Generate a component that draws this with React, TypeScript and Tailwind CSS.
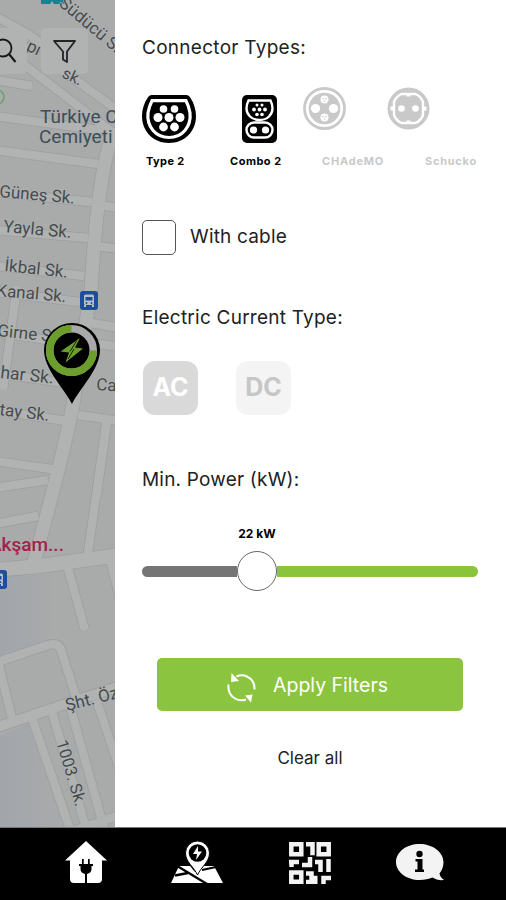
import React from 'react'

const roads = [
  'M-5 16 L28 34 L62 58 M18 60 L120 138 M62 70 L120 112 M-5 80 L32 86 M-5 116 L120 133',
  'M-5 150 L98 164 M-5 192 L92 202 M-5 230 L88 238 M-5 266 L84 276 M-5 292 L80 302 M-5 332 L80 345 M-5 373 L72 384 M-5 410 L66 421',
  'M98 205 L120 208 M96 246 L120 249 M86 322 L120 328 M84 342 L120 347 M78 415 L120 421 M108 415 L96 500',
  'M17 286 L3 390 M-5 461 L58 470 M-5 488 L48 480 M-5 524 L38 516',
  'M107 418 L87 560 M67 565 L85 630 M110 560 L120 598',
  'M-5 663 L48 645 Q58 642 61 650 L77 700 M-2 662 L13 722 M32 718 L72 835 M52 712 L88 835 M70 706 L106 835 M95 696 L120 770 M70 832 L120 815',
]

const mainRoads = [
  { d: 'M113 135 Q98 170 91 290 L72 410 Q62 460 34 562', w: 13 },
  { d: 'M-5 570 L40 566 L120 555', w: 14 },
  { d: 'M-5 728 L60 706 L120 686', w: 10 },
]

const streets = [
  { x: -1, y: 197, r: 5, size: 17, text: 'Güneş Sk.' },
  { x: 3, y: 232, r: 5, size: 17.2, text: 'Yayla Sk.' },
  { x: 4, y: 271, r: 6, size: 17, text: 'İkbal Sk.' },
  { x: -4, y: 296, r: 5, size: 17, text: 'Kanal Sk.' },
  { x: -3, y: 336, r: 6, size: 17, text: 'Girne Sk.' },
  { x: 0, y: 378, r: 6, size: 17.5, text: 'har Sk.' },
  { x: -1, y: 415, r: 7, size: 17, text: 'tay Sk.' },
  { x: 96, y: 390, r: 4, size: 17, text: 'Cad.' },
  { x: 67, y: 711, r: -14, size: 17, text: 'Şht. Özcan' },
  { x: 56, y: 742, r: 73, size: 16.5, text: '1003. Sk.' },
  { x: 58, y: 5, r: 40, size: 17, text: 'Südücü Sk.' },
  { x: 17, y: 46, r: 25, size: 17, text: 'apı' },
  { x: 61, y: 77, r: 25, size: 16, text: 'sk.' },
]

const BusStop = ({ x, y }: { x: number; y: number }) => (
  <g transform={`translate(${x} ${y})`}>
    <rect width="18" height="19" rx="3" fill="#1f4c9f" />
    <rect x="4" y="3.5" width="10" height="10.5" rx="1.5" fill="#b4bdca" />
    <rect x="5.5" y="6" width="7" height="3.5" fill="#1f4c9f" />
    <circle cx="6.5" cy="12" r="0.9" fill="#1f4c9f" />
    <circle cx="11.5" cy="12" r="0.9" fill="#1f4c9f" />
    <path d="M5 14v2M13 14v2" stroke="#b4bdca" strokeWidth="2" />
  </g>
)

const MapView = () => (
  <svg className="block h-[827px] w-[115px] shrink-0" viewBox="0 0 115 827" fontFamily="Roboto, sans-serif">
    <defs>
      <linearGradient id="park">
        <stop offset="0" stopColor="#a2a6ab" />
        <stop offset="1" stopColor="#a9aaaa" />
      </linearGradient>
    </defs>
    <rect width="115" height="827" fill="#a9aaaa" />
    <path d="M0 577 L50 574 L50 645 L0 660Z M0 736 L30 724 L68 827 L0 827Z" fill="url(#park)" />
    <g fill="none" stroke="#9c9e9f">
      {roads.map((d) => <path key={d} d={d} strokeWidth="10" />)}
      {mainRoads.map((m) => <path key={m.d} d={m.d} strokeWidth={m.w + 1.6} />)}
    </g>
    <g fill="none" stroke="#b1b3b3">
      {roads.map((d) => <path key={d} d={d} strokeWidth="8.4" />)}
      {mainRoads.map((m) => <path key={m.d} d={m.d} strokeWidth={m.w} />)}
    </g>

    <path d="M41 0h25v4H54l-2-3-2 3h-9z" fill="#168294" />
    <circle cx="-3" cy="97" r="7" fill="none" stroke="#65a36a" strokeWidth="1.5" />

    {/* search and filter buttons sit under the labels that run past them */}
    <rect x="-20" y="28" width="47" height="46" rx="5" fill="#b1b2b2" />
    <rect x="41" y="28" width="47" height="46" rx="5" fill="#b1b2b2" />

    <g fill="#454b4e" stroke="#b1b3b3" strokeWidth="1.5" paintOrder="stroke">
      {streets.map((s) => (
        <text key={s.text} fontSize={s.size} transform={`translate(${s.x} ${s.y}) rotate(${s.r})`}>{s.text}</text>
      ))}
    </g>
    <g fill="#3d4e57" fontSize="19">
      <text x="40" y="123">Türkiye C</text>
      <text x="39" y="143">Cemiyeti</text>
    </g>
    <text x="-11" y="551" fontSize="19" fontWeight="500" fill="#a51f4b">Akşam...</text>
    <BusStop x={80} y={291} />
    <BusStop x={-11} y={570} />

    <path d="M-20 28H22q5 0 5 5V69q0 5-5 5H-20z" fill="#b1b2b2" />
    <circle cx="3" cy="48" r="8.5" fill="none" stroke="#16191b" strokeWidth="1.8" />
    <path d="M9 54l6.5 8" stroke="#16191b" strokeWidth="2.2" />
    <path d="M54 41h21l-8 10.500v10.500l-4-2.500v-8z" fill="none" stroke="#202426" strokeWidth="1.8" strokeLinejoin="round" />

    {/* charging station pin */}
    <path d="M72 404 C64 388 44 369 44 350 A28 27 0 0 1 100 350 C100 369 80 388 72 404Z" fill="#000" />
    <circle cx="71.500" cy="350.500" r="21.800" fill="none" stroke="#a9a9ac" strokeWidth="7.500" />
    <path d="M93.300 350.500 A21.800 21.800 0 1 1 71.500 328.700" fill="none" stroke="#6c9e2c" strokeWidth="7.500" />
    <path d="M80 338 L60.500 351.500 L69 352.500 L65.500 362.500 L83 348.500 L75 347.500Z" fill="#6c9e2c" />
    <path d="M76.500 341 L70 351.500 M74 349 L68 359" stroke="#000" strokeWidth="0.8" />
  </svg>
)

const Type2Icon = () => (
  <svg className="h-[48px] w-[54px]" viewBox="0 0 54 48">
    <path d="M10 0h34q3 0 4.500 3C52 8 54 15 54 21 54 37 42 48 27 48S0 37 0 21C0 15 2 8 5.500 3Q7 0 10 0Z" />
    <path d="M10 5.700h34q3 6 4 12C49.500 32 40 42.500 27 42.500S4.500 32 6 17.700q1-6 4-12Z" fill="none" stroke="#fff" strokeWidth="3.200" />
    <g fill="#fff">
      <circle cx="21.500" cy="14" r="3.800" /><circle cx="32.500" cy="14" r="3.800" />
      <circle cx="16" cy="22.500" r="4.500" /><circle cx="27" cy="22.500" r="4.500" /><circle cx="38" cy="22.500" r="4.500" />
      <circle cx="21.500" cy="32" r="4.400" /><circle cx="32.500" cy="32" r="4.400" />
    </g>
  </svg>
)

const ComboIcon = () => (
  <svg className="h-[48px] w-[35px]" viewBox="0 0 35 48">
    <rect width="35" height="48" rx="5" />
    <path d="M6.500 5.500h22q2 4 2 8c0 6-5 11.500-13 11.500S4.500 19.500 4.500 13.500q0-4 2-8Z" fill="none" stroke="#fff" strokeWidth="2.400" />
    <rect x="4.500" y="27.500" width="26" height="15" rx="7.500" fill="none" stroke="#fff" strokeWidth="2.400" />
    <g fill="#fff">
      <circle cx="15" cy="10" r="1.500" /><circle cx="20" cy="10" r="1.500" />
      <circle cx="12" cy="14.500" r="1.900" /><circle cx="17.500" cy="14.500" r="1.900" /><circle cx="23" cy="14.500" r="1.900" />
      <circle cx="15" cy="19.500" r="1.800" /><circle cx="20" cy="19.500" r="1.800" />
      <circle cx="11.500" cy="35" r="3.600" /><circle cx="23.500" cy="35" r="3.600" />
    </g>
  </svg>
)

const ChademoIcon = () => (
  <svg className="size-[43px]" viewBox="0 0 43 43" fill="#c9c9c9">
    <circle cx="21.500" cy="21.500" r="20" fill="#fff" stroke="#c9c9c9" strokeWidth="2.800" />
    <circle cx="21.500" cy="21.500" r="15.800" />
    <g fill="#fff">
      <circle cx="12.500" cy="21.500" r="4.600" /><circle cx="30.500" cy="21.500" r="4.600" />
      <circle cx="21.500" cy="12.500" r="4" /><circle cx="21.500" cy="30.500" r="4" />
    </g>
    <g>
      <circle cx="20" cy="11.500" r="0.800" /><circle cx="23" cy="11.500" r="0.800" /><circle cx="21.500" cy="14" r="0.800" />
      <circle cx="20" cy="29.500" r="0.800" /><circle cx="23" cy="29.500" r="0.800" /><circle cx="21.500" cy="32" r="0.800" />
    </g>
  </svg>
)

const SchuckoIcon = () => (
  <svg className="size-[43px]" viewBox="0 0 43 43">
    <circle cx="21.500" cy="21.500" r="21" fill="#c9c9c9" />
    <path d="M14.500 7h14q5.500 2.500 7.500 8v13q-2 5.500-7.500 8h-14Q9 33.500 7 28V15q2-5.500 7.500-8Z" fill="none" stroke="#fff" strokeWidth="2.400" />
    <path d="M19.500 6h4v3.500h-4zM19.500 33.500h4V37h-4zM3.500 19.500h3.500v4H3.500zM36 19.500h3.500v4H36z" fill="#fff" />
    <g fill="#fff"><circle cx="14.500" cy="21.500" r="3.300" /><circle cx="28.500" cy="21.500" r="3.300" /></g>
  </svg>
)

const RefreshIcon = () => (
  <svg className="h-[32px] w-[30px]" viewBox="0 0 30 32" fill="none" stroke="#fff" strokeWidth="2">
    <path d="M9.500 4.500Q15 2 20 4.500Q28 8.500 27.500 17.500" />
    <path d="M1.500 12.500Q0.500 22 8 26.500Q13 29.500 19 27.500" />
    <path d="M4.500 1l7.500 8-8 1z M18 23.500l7.500-1-1.500 8z" fill="#fff" stroke="none" />
  </svg>
)

const HomeIcon = () => (
  <svg className="h-[43px] w-[42px]" viewBox="0 0 42 43" fill="#fff">
    <path d="M21 0L0 19.500h5V38q0 4 4 4h24q4 0 4-4V19.500h5Z" />
    <path d="M14 23h14v2h-1.500v3q0 4-4.500 5v9h-2v-9q-4.500-1-4.500-5v-3H14z M17 18h1.700v5H17z M23 18h1.700v5H23z" fill="#000" />
  </svg>
)

const MapPinIcon = () => (
  <svg className="h-[43px] w-[52px]" viewBox="0 0 52 43" fill="#fff">
    <path d="M8 25l11 0 5 6 5-6h14l9 17H0Z" />
    <path d="M7 25.500L36 43M4 34.500l13-2.500M31 29l14-3" stroke="#000" strokeWidth="2.300" fill="none" />
    <path d="M26.500 34C23 26 14.500 21 14.500 12a12 12 0 0 1 24 0C38.500 21 30 26 26.500 34Z" stroke="#000" strokeWidth="1" />
    <circle cx="26.500" cy="12" r="8.800" fill="#000" />
    <path d="M27 5l-5 8h4l-1 6 6-8.500h-4z" />
  </svg>
)

const QrIcon = () => (
  <svg className="size-[42px]" viewBox="0 0 42 42" fill="none" stroke="#f3f3f3" strokeWidth="4.500">
    <path d="M2.300 2.300h10v10h-10zM29.700 2.300h10v10h-10zM2.300 30.500h10v9.200h-10z" />
    <path d="M17 2.300h6.500v11M0 20h10M2.500 18v7M21 15v8h-8M26 20h5.500v10M39.500 17v13M17 31.500h5.500v4.500h6M17 40h11.500M34.500 42v-6H42" />
  </svg>
)

const InfoIcon = () => (
  <svg className="h-[37px] w-[48px]" viewBox="0 0 48 37">
    <path d="M23.500 0C10.500 0 0 8 0 18s10.500 18 23.500 18c5.500 0 9-1 13-2.500 3 2 7 3 11.500 2.500q-4-3-4.500-6.500c2.500-3 4-7 4-11.500C47.500 8 36.500 0 23.500 0Z" fill="#f3f3f3" />
    <circle cx="23.500" cy="10" r="3.200" />
    <path d="M19.500 15h7v10.500H28V28h-9v-2.500h2.500v-8h-2z" />
  </svg>
)

const connectors = [
  { name: 'Type 2', icon: <Type2Icon />, cell: 'w-[54px]', pad: 'pt-2', label: 'ml-1 text-black tracking-[0.4px]' },
  { name: 'Combo 2', icon: <ComboIcon />, cell: 'ml-[46px] w-[35px]', pad: 'pt-2', label: '-ml-3 text-black tracking-[0.5px]' },
  { name: 'CHAdeMO', icon: <ChademoIcon />, cell: 'ml-[26px] w-[43px]', pad: '', label: 'ml-[19px] text-[#c9c9c9] tracking-[0.8px]' },
  { name: 'Schucko', icon: <SchuckoIcon />, cell: 'ml-[41px] w-[43px]', pad: '', label: 'ml-[38px] text-[#c9c9c9] tracking-[0.75px]' },
]

const FilterPanel = () => (
  <section className="h-[827px] w-[391px] shrink-0 bg-white pl-[27px] pt-9 text-[#222]">
    <h2 className="h-6 text-[19px] leading-6 tracking-[0.28px]">Connector Types:</h2>

    <div className="mt-[27px] flex h-[82px]">
      {connectors.map((c) => (
        <div key={c.name} className={`${c.cell} flex shrink-0 flex-col`}>
          <div className={`${c.pad} h-[66px]`}>{c.icon}</div>
          <span className={`${c.label} whitespace-nowrap text-[11px] font-bold leading-4`}>{c.name}</span>
        </div>
      ))}
    </div>

    <label className="mt-[51px] flex h-[35px] items-center">
      <span className="h-[35px] w-[34px] rounded-[5px] border-[1.5px] border-[#555]" />
      <span className="ml-[14px] pb-[2px] text-[19px] leading-6 tracking-[0.18px]">With cable</span>
    </label>

    <h2 className="mt-[51px] h-6 text-[19px] leading-6 tracking-[0.24px]">Electric Current Type:</h2>
    <div className="ml-[1px] mt-[31px] flex gap-[38px] text-[25px] font-bold">
      <button className="h-[54px] w-[55px] rounded-xl bg-[#d9d9d9] text-white">AC</button>
      <button className="h-[54px] w-[55px] rounded-xl bg-[#f4f4f4] text-[#c6c6c6]">DC</button>
    </div>

    <h2 className="mt-[53px] h-6 text-[19px] leading-6 tracking-[0.2px]">Min. Power (kW):</h2>
    <div className="w-[336px]">
      <div className="mt-[34px] w-[230px] text-center text-xs font-bold leading-4 text-black">22 kW</div>
      <div className="mt-[9px] flex h-10 items-center">
        <div className="h-[11px] w-[95px] rounded-l-full bg-[#757575]" />
        <div className="size-10 rounded-full border border-[#666] bg-white" />
        <div className="h-[11px] flex-1 rounded-r-full bg-[#8ac43a]" />
      </div>
    </div>

    <button className="ml-[15px] mt-[67px] flex h-[53px] w-[306px] items-center rounded-[5px] bg-[#8bc53f] pl-[70px] text-white">
      <span className="pt-[6px]"><RefreshIcon /></span>
      <span className="ml-4 pt-[2px] text-[19.5px]">Apply Filters</span>
    </button>
    <button className="mt-[35px] block w-[336px] text-center text-[17px] leading-6">Clear all</button>
  </section>
)

const NavBar = () => (
  <nav className="flex h-[73px] items-start border-t border-[#777] bg-black pl-[65px] pt-[13px]">
    <HomeIcon />
    <span className="ml-16"><MapPinIcon /></span>
    <span className="ml-[66px] pt-[1px]"><QrIcon /></span>
    <span className="ml-[65px] pt-[3px]"><InfoIcon /></span>
  </nav>
)

const App = () => {
  return (
    <main className="h-[900px] w-[506px] overflow-hidden bg-white font-['Inter',sans-serif]">
      <div className="flex">
        <MapView />
        <FilterPanel />
      </div>
      <NavBar />
    </main>
  )
}

export default App
